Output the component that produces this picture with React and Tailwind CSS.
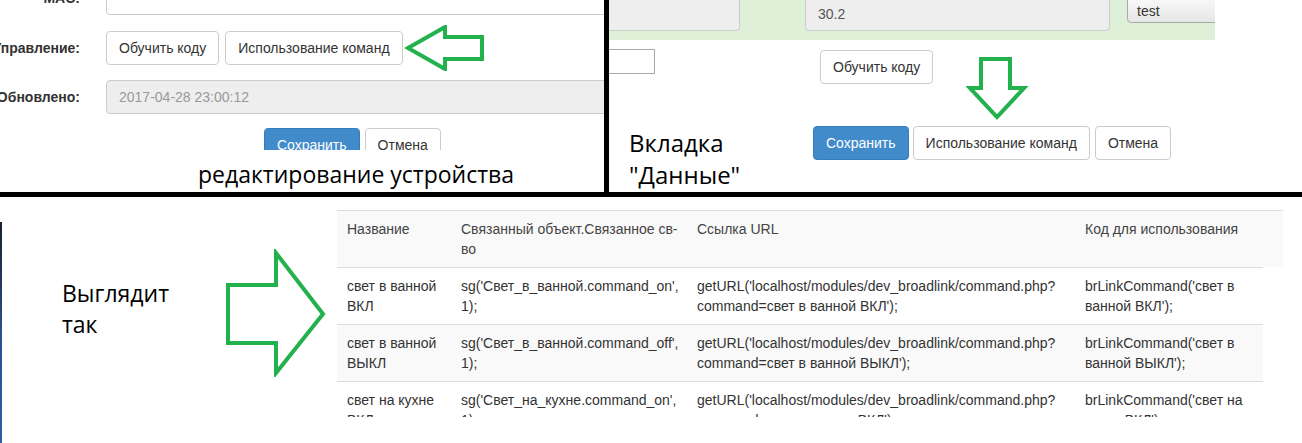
import React from 'react';

const arial = "font-['Liberation_Sans',Arial,sans-serif]";
const note = "font-['Open_Sans','Noto_Sans',sans-serif] text-black";

const Btn = ({ children, primary, className = '' }) => (
    <button
        className={`h-[34px] px-3 flex items-center rounded-[4px] border text-[14px] whitespace-nowrap ${
            primary ? 'bg-[#428bca] border-[#357ebd] text-white' : 'bg-white border-[#ccc] text-[#333]'
        } ${className}`}
    >
        {children}
    </button>
);

const Label = ({ children }) => (
    <div className="w-[80px] shrink-0 flex justify-end whitespace-nowrap font-bold text-[14px] text-[#333]">
        {children}
    </div>
);

const GREEN = '#22b14c';

// top-left: device edit form
const EditPanel = () => (
    <div className={`w-[604px] h-[192px] shrink-0 overflow-hidden flex flex-col ${arial}`}>
        <div className="h-[150px] shrink-0 overflow-hidden">
            <div className="mt-[-19px] flex items-center h-[34px]">
                <Label>MAC:</Label>
                <div className="ml-[26px] w-[560px] h-[34px] shrink-0 border border-[#ccc] rounded-[4px] bg-white" />
            </div>

            <div className="mt-[16px] flex items-center h-[34px]">
                <Label>Управление:</Label>
                <div className="ml-[26px] flex gap-[6px]">
                    <Btn>Обучить коду</Btn>
                    <Btn>Использование команд</Btn>
                </div>
                <svg width="82" height="46" viewBox="0 0 82 46" className="ml-[1px] shrink-0">
                    <polygon
                        points="4,23 41,2 41,12 78,12 78,34 41,34 41,44"
                        fill="none"
                        stroke={GREEN}
                        strokeWidth="4"
                        strokeLinejoin="miter"
                    />
                </svg>
            </div>

            <div className="mt-[15px] flex items-center h-[34px]">
                <Label>Обновлено:</Label>
                <div className="ml-[26px] w-[560px] h-[34px] shrink-0 border border-[#ccc] rounded-[4px] bg-[#eee] flex items-center pl-3 text-[14px] text-[#999]">
                    2017-04-28 23:00:12
                </div>
            </div>

            <div className="mt-[14px] ml-[264px] flex gap-[5px]">
                <Btn primary>Сохранить</Btn>
                <Btn>Отмена</Btn>
            </div>
        </div>
        <div className={`pt-[8px] pl-[198px] whitespace-nowrap text-[23px] leading-[32px] ${note}`}>
            редактирование устройства
        </div>
    </div>
);

// top-right: "Данные" tab
const DataPanel = () => (
    <div className={`relative w-[693px] h-[192px] shrink-0 overflow-hidden ${arial}`}>
        <div className="w-[606px] h-[40px] bg-[#dff0d8] flex items-start overflow-hidden">
            <div className="ml-[-20px] mt-[-3px] w-[151px] h-[34px] shrink-0 bg-[#eee] border border-[#ccc] rounded-[4px]" />
            <div className="ml-[65px] mt-[-3px] w-[305px] h-[34px] shrink-0 bg-[#eee] border border-[#ccc] rounded-[4px] flex items-center pl-3 text-[14px] text-[#555]">
                30.2
            </div>
            <div className="ml-[17px] mt-[-10px] w-[110px] h-[33px] shrink-0 bg-linear-to-b from-white to-[#e6e6e6] border border-[#aaa] rounded-[4px] flex items-end pl-[9px] pb-[1px] text-[14px] leading-[20px] text-[#333]">
                test
            </div>
        </div>

        <div className="flex">
            <div className="w-[204px] shrink-0">
                <div className="mt-[9px] ml-[-1px] w-[47px] h-[25px] border border-[#a9a9a9] bg-white" />
                <div className={`mt-[53px] ml-[20px] whitespace-nowrap text-[24px] leading-[32px] ${note}`}>
                    Вкладка
                    <br />
                    "Данные"
                </div>
            </div>
            <div>
                <Btn className="mt-[10px] ml-[7px]">Обучить коду</Btn>
                <div className="mt-[42px] flex gap-[4px]">
                    <Btn primary>Сохранить</Btn>
                    <Btn>Использование команд</Btn>
                    <Btn className="ml-[1px]">Отмена</Btn>
                </div>
            </div>
        </div>

        {/* annotation arrow over the form */}
        <svg width="62" height="66" viewBox="0 0 62 66" className="absolute left-[357px] top-[55px]">
            <polygon
                points="15,4 44,4 44,33 58,33 31,62 4,33 15,33"
                fill="none"
                stroke={GREEN}
                strokeWidth="4"
            />
        </svg>
    </div>
);

const rows = [
    {
        name: ['свет в ванной', 'ВКЛ'],
        obj: ["sg('Свет_в_ванной.command_on',", '1);'],
        url: ["getURL('localhost/modules/dev_broadlink/command.php?", "command=свет в ванной ВКЛ');"],
        code: ["brLinkCommand('свет в", "ванной ВКЛ');"],
    },
    {
        name: ['свет в ванной', 'ВЫКЛ'],
        obj: ["sg('Свет_в_ванной.command_off',", '1);'],
        url: ["getURL('localhost/modules/dev_broadlink/command.php?", "command=свет в ванной ВЫКЛ');"],
        code: ["brLinkCommand('свет в", "ванной ВЫКЛ');"],
    },
    {
        name: ['свет на кухне', 'ВКЛ'],
        obj: ["sg('Свет_на_кухне.command_on',", '1);'],
        url: ["getURL('localhost/modules/dev_broadlink/command.php?", "command=свет на кухне ВКЛ');"],
        code: ["brLinkCommand('свет на", "кухне ВКЛ');"],
    },
];

const Cell = ({ lines, first }) => (
    <div className={`py-[8px] pr-[8px] ${first ? 'pl-[10px]' : 'pl-[8px]'} whitespace-nowrap overflow-hidden`}>
        {lines[0]}
        <br />
        {lines[1]}
    </div>
);

const CommandsTable = () => (
    <div className={`mt-[13px] ml-[9px] w-[946px] h-[207px] shrink-0 overflow-hidden text-[14px] leading-[20px] text-[#333] ${arial}`}>
        <div className="grid grid-cols-[116px_236px_388px_206px] bg-[#f9f9f9] border-t border-[#ddd] text-[#444]">
            <Cell first lines={['Название', '']} />
            <Cell lines={['Связанный объект.Связанное св-', 'во']} />
            <Cell lines={['Ссылка URL', '']} />
            <Cell lines={['Код для использования', '']} />
        </div>
        {rows.map((r, i) => (
            <div
                key={i}
                className={`w-[926px] grid grid-cols-[116px_236px_388px_186px] border-t border-[#ddd] ${
                    i % 2 === 1 ? 'bg-[#f9f9f9]' : 'bg-white'
                }`}
            >
                <Cell first lines={r.name} />
                <Cell lines={r.obj} />
                <Cell lines={r.url} />
                <Cell lines={r.code} />
            </div>
        ))}
    </div>
);

const ResultPanel = () => (
    <div className="h-[246px] flex items-start overflow-hidden">
        <div className="w-[2px] h-[221px] mt-[25px] shrink-0 bg-linear-to-b from-[#18202e] via-[#2b4f8f] to-[#2f5fa9]" />
        <div className={`w-[162px] ml-[60px] mt-[81px] shrink-0 text-[23px] leading-[31px] ${note}`}>
            Выглядит
            <br />
            так
        </div>
        <svg width="104" height="128" viewBox="0 0 104 128" className="mt-[52px] shrink-0">
            <polygon
                points="4,36 52,36 52,4 99,65 52,124 52,94 4,94"
                fill="none"
                stroke={GREEN}
                strokeWidth="4"
            />
        </svg>
        <CommandsTable />
    </div>
);

const App = () => (
    <div className="w-[1302px] h-[443px] bg-white overflow-hidden flex flex-col">
        <div className="flex h-[192px] shrink-0">
            <EditPanel />
            <div className="w-[5px] shrink-0 bg-black" />
            <DataPanel />
        </div>
        <div className="h-[5px] shrink-0 bg-black" />
        <ResultPanel />
    </div>
);

export default App;
